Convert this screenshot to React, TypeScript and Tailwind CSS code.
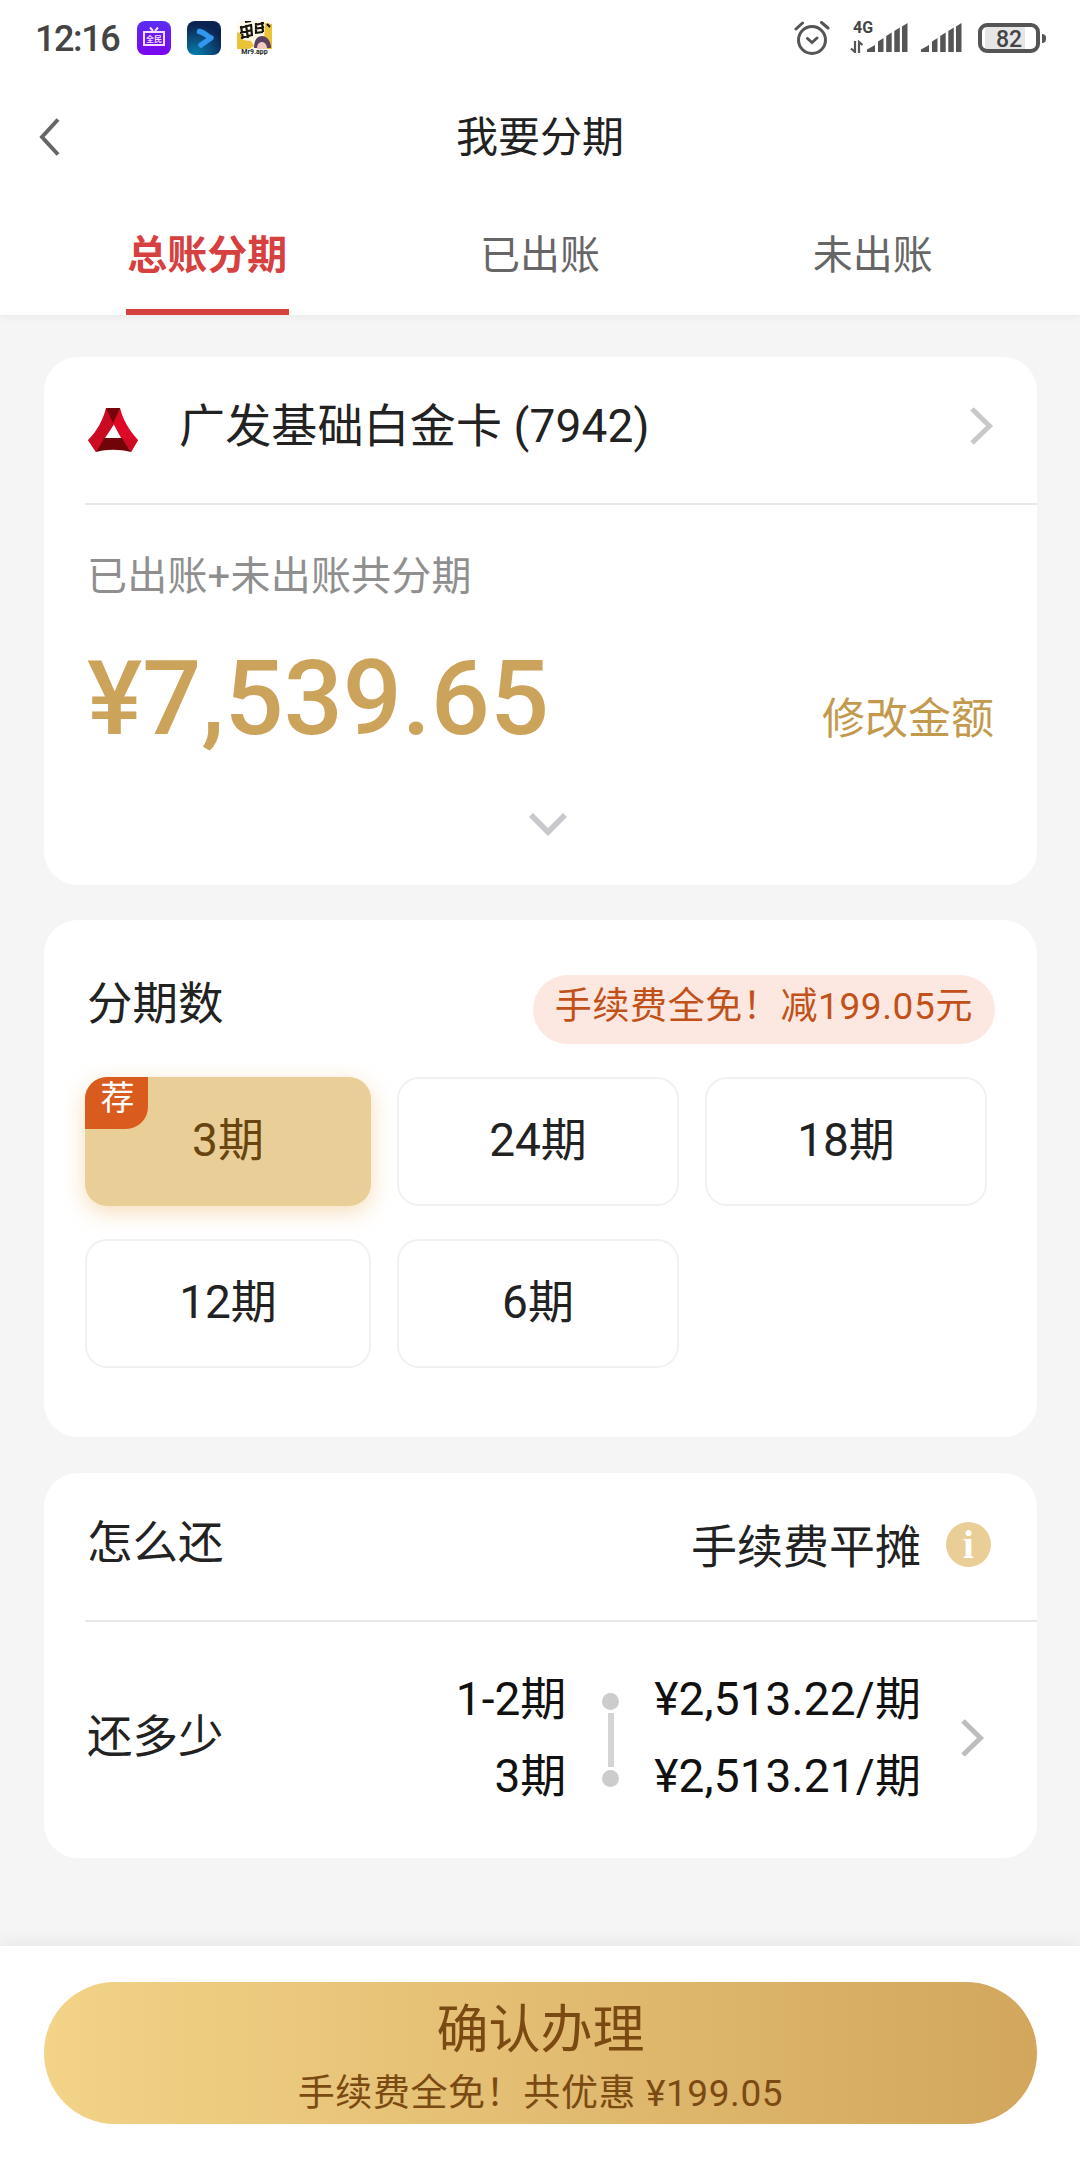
import { useState } from "react"
import clsx from "clsx"

const tabs = ["总账分期", "已出账", "未出账"]

const periods = [
  { label: "3期", recommended: true },
  { label: "24期" },
  { label: "18期" },
  { label: "12期" },
  { label: "6期" },
]

const schedule = [
  { period: "1-2期", amount: "¥2,513.22/期" },
  { period: "3期", amount: "¥2,513.21/期" },
]

function Signal() {
  return (
    <svg width="41" height="30" viewBox="0 0 41 30" fill="#555">
      <path d="M0 29v-2.500l8-4.500v7zM11 29V18.500l5.500-3.500v14zM19.200 29V13l5.500-3.500V29zM27.300 29V8l5.500-3.500V29zM35 29V3.500L40.500 0v29z" />
    </svg>
  )
}

function ChevronRight({ className }: { className?: string }) {
  return (
    <svg className={className} width="24" height="38" viewBox="0 0 24 38" fill="none" stroke="currentColor" strokeWidth="5">
      <path d="M2 2l17.500 17L2 36" />
    </svg>
  )
}

function StatusBar() {
  return (
    <div className="flex h-[76px] items-center pl-[35px] pr-[34px] text-[#444]">
      <span className="w-[102px] pt-0.5 text-[36px] leading-[76px] font-medium tracking-[-1.4px]">12:16</span>

      {/* App notifications */}
      <svg className="mr-4" width="34" height="34" viewBox="0 0 34 34">
        <defs>
          <linearGradient id="tv" x1="0" y1="0" x2="0" y2="1">
            <stop offset="0" stopColor="#5b2ef2" />
            <stop offset="1" stopColor="#7a05f0" />
          </linearGradient>
        </defs>
        <rect width="34" height="34" rx="8" fill="url(#tv)" />
        <path d="M7 11h20v13H7zM13 6.500l3 3.500M21 6.500L18 10" fill="none" stroke="#f3dcff" strokeWidth="2" />
        <text x="17" y="20.800" textAnchor="middle" fontSize="8" fontWeight="700" fill="#f3dcff">全民</text>
      </svg>
      <svg className="mr-4" width="34" height="34" viewBox="0 0 34 34">
        <defs>
          <radialGradient id="play" cx="0.25" cy="1" r="0.9">
            <stop offset="0" stopColor="#087fae" />
            <stop offset="1" stopColor="#0b2350" />
          </radialGradient>
        </defs>
        <rect width="34" height="34" rx="8" fill="url(#play)" />
        <path d="M12.500 10.500c4 .500 7 4 11.500 6.500-4 2.500-7 5-10 7" fill="none" stroke="#3196ee" strokeWidth="5.500" strokeLinecap="round" strokeLinejoin="round" />
      </svg>
      <svg width="35" height="34" viewBox="0 0 35 34">
        <rect width="35" height="28" rx="5" fill="#fffbe8" />
        <path d="M0 11l4 2 2 6 8 1 3 5-5 3H0zM28 2l7 1v25h-5l-3-9z" fill="#eac436" />
        <path d="M17 27c0-8 3-12 8-12s9 5 9 12z" fill="#5b4262" />
        <path d="M20 28c0-5 2-7 5-7s5 3 5 7z" fill="#f3c9bd" />
        <path d="M3 7l11-3M3 12l12-3M4 17l11-3M4 5l2 13M9 4l2 13M14 3l1 12M18 4l9-2M18 8l9-2M18 12l8-1M19 2v11M25 1l1 10M30 3l3 3M8 1l6-1" fill="none" stroke="#171512" strokeWidth="2.200" />
        <text x="17.500" y="33" textAnchor="middle" fontSize="7" fontWeight="700" fill="#222">Mr9.app</text>
      </svg>

      {/* System indicators */}
      <svg className="ml-auto" width="36" height="36" viewBox="0 0 36 36" fill="none" stroke="#555" strokeWidth="3" strokeLinecap="round">
        <circle cx="18" cy="20" r="13.500" />
        <path d="M13.500 18.500l4.500 4 5-4.500M2 9l6.500-6M34 8l-6.500-5.500" />
      </svg>
      <div className="relative ml-[18px] flex h-9 w-[60px] items-end justify-end pb-[3px]">
        <span className="absolute left-[5px] top-0 text-[16px] leading-none font-bold">4G</span>
        <svg className="absolute bottom-[3px] left-0.5" width="13" height="13" viewBox="0 0 13 13" fill="none" stroke="#555" strokeWidth="2.200">
          <path d="M5 1v11L1 8.500M9 13V2l3.500 3" />
        </svg>
        <Signal />
      </div>
      <div className="ml-[13px] flex h-9 items-end pb-[3px]">
        <Signal />
      </div>
      <div className="ml-4 flex h-[30px] w-[62px] items-center justify-center rounded-[9px] border-4 border-[#555] bg-[linear-gradient(90deg,#fff_3px,#e6e6e6_3px,#e6e6e6_43px,#fff_43px)]">
        <span className="pt-0.5 text-[23px] leading-none font-medium">82</span>
      </div>
      <div className="ml-[2px] h-[9px] w-1 rounded-r-sm bg-[#555]" />
    </div>
  )
}

function BankLogo() {
  return (
    <svg width="50" height="44" viewBox="0 0 50 44">
      <path d="M18 0h14c3 12 9 22 18 32L43 44 33 30 25 15z" fill="#dd0927" />
      <path d="M32 0c-5 15-10 28-24 44L0 32C9 23 15 12 18 0z" fill="#c90a20" />
      <path d="M18 0h14l-7 15z" fill="#76050b" />
      <path d="M25 18l8 12H17z" fill="#fff" />
      <path d="M16 30h18l9 14c-12-3-24-3-35 0z" fill="#710408" />
      <path d="M0 32l16-2-8 14zM50 32l-16-2 9 14z" fill="#cd0b22" />
    </svg>
  )
}

export default function App() {
  const [activeTab, setActiveTab] = useState(0)
  const [selected, setSelected] = useState(0)

  return (
    <div className="flex h-[2160px] w-[1080px] flex-col overflow-hidden bg-[#f5f5f5] font-[Roboto,'Noto_Sans_CJK_SC',sans-serif] text-[#222]">
      <header className="relative h-[315px] bg-white shadow-[0_2px_8px_rgba(0,0,0,0.05)]">
        <StatusBar />
        <div className="grid h-[124px] grid-cols-[120px_1fr_120px] items-center">
          <button aria-label="返回" className="pb-[3px] pl-[39px]">
            <svg width="22" height="38" viewBox="0 0 22 38" fill="none" stroke="#666" strokeWidth="4">
              <path d="M19 1.500L3 19l16 17.500" />
            </svg>
          </button>
          <h1 className="text-center text-[42px] leading-[124px]">我要分期</h1>
        </div>
        <nav className="grid h-[115px] grid-cols-3 px-[41px]">
          {tabs.map((tab, i) => (
            <button
              key={tab}
              onClick={() => setActiveTab(i)}
              className={clsx(
                "justify-self-center border-b-[6px] px-[1.5px] pt-[3px] text-[40px] leading-[106px]",
                i === activeTab ? "border-[#d6403e] font-bold text-[#d6403e]" : "border-transparent text-[#666]",
              )}
            >
              {tab}
            </button>
          ))}
        </nav>
      </header>

      <main className="flex flex-1 flex-col px-[44px] pt-[42px]">
        {/* Card and amount */}
        <section className="h-[528px] w-[993px] rounded-[34px] bg-white pl-[41px]">
          <div className="flex h-[148px] items-center border-b-2 border-[#e8e8e8] pr-[43px] pl-[3px]">
            <BankLogo />
            <span className="ml-[41px] flex-1 pb-[9px] text-[46px] leading-[60px] tracking-[0.15px]">广发基础白金卡 (7942)</span>
            <ChevronRight className="mb-[9px] text-[#c8c8c8]" />
          </div>
          <p className="pt-[42px] pl-0.5 text-[40px] leading-[60px] tracking-[0.2px] text-[#8f8f8f]">已出账+未出账共分期</p>
          <div className="flex h-[150px] items-baseline justify-between pt-0.5 pr-[43px] pl-0.5">
            <span className="text-[104px] leading-[180px] font-medium text-[#cca35b]">¥7,539.65</span>
            <button className="text-[43px] text-[#c39a4d]">修改金额</button>
          </div>
          <svg className="ml-[444px] mt-[56px]" width="38" height="24" viewBox="0 0 38 24" fill="none" stroke="#c8c8cc" strokeWidth="5.500">
            <path d="M2 2l17 17L36 2" />
          </svg>
        </section>

        {/* Number of instalments */}
        <section className="mt-[35px] h-[517px] w-[993px] rounded-[34px] bg-white pl-[41px]">
          <div className="flex items-start justify-between pt-[55px] pr-[42px] pl-0.5">
            <h2 className="text-[45.500px] leading-[60px]">分期数</h2>
            <span className="h-[69px] rounded-full bg-[#fce8e0] px-[22px] text-[37px] leading-[64px] tracking-[0.6px] text-[#c25119]">
              手续费全免！减199.05元
            </span>
          </div>
          <div className="mt-[33px] grid grid-cols-[286px_282px_282px] gap-x-[26px] gap-y-[33px]">
            {periods.map((p, i) => (
              <button
                key={p.label}
                onClick={() => setSelected(i)}
                className={clsx(
                  "relative h-[129px] rounded-[22px] pb-[3px] text-[46px] leading-none",
                  i === selected
                    ? "bg-[#e9cf97] text-[#684411] shadow-[0_6px_22px_rgba(233,176,90,0.42)]"
                    : "border-[2.500px] border-[#f1f1f1]",
                )}
              >
                {p.label}
                {p.recommended && (
                  <span className="absolute top-0 left-0 h-[52px] w-[63px] rounded-tl-[22px] rounded-br-[22px] bg-[#d95b1e] pl-0.5 text-[34px] leading-[42px] text-white">
                    荐
                  </span>
                )}
              </button>
            ))}
          </div>
        </section>

        {/* Repayment */}
        <section className="mt-[36px] h-[385px] w-[993px] rounded-[34px] bg-white pl-[41px]">
          <div className="flex h-[149px] items-center border-b-2 border-[#e8e8e8] pr-[46px] pl-0.5 text-[45.500px] leading-[60px]">
            <h2 className="flex-1 pb-1.5">怎么还</h2>
            <span className="mr-[25px] text-[46px]">手续费平摊</span>
            <span className="mb-1 flex h-[45px] w-[45px] items-center justify-center rounded-full bg-[#e9cf97] font-['Liberation_Serif',serif] text-[39px] leading-none font-bold text-white">
              i
            </span>
          </div>
          <div className="flex h-[231px] items-center pr-[52px] pl-0.5 text-[46px] leading-[77px]">
            <h2 className="flex-1 text-[45.500px]">还多少</h2>
            <div className="text-right text-[#111]">
              {schedule.map((s) => (
                <p key={s.period}>{s.period}</p>
              ))}
            </div>
            <div className="mr-[35px] ml-9 mt-1 flex flex-col items-center gap-[3px]">
              <div className="h-[17px] w-[17px] rounded-full bg-[#ccc]" />
              <div className="h-[54px] w-[6px] bg-[#d4d4d4]" />
              <div className="h-[17px] w-[17px] rounded-full bg-[#ccc]" />
            </div>
            <div className="tracking-[0.12px] text-[#111]">
              {schedule.map((s) => (
                <p key={s.period}>{s.amount}</p>
              ))}
            </div>
            <ChevronRight className="ml-10 text-[#bdbdbd]" />
          </div>
        </section>
      </main>

      <footer className="h-[214px] bg-white px-[44px] pt-[36px] shadow-[0_-4px_16px_rgba(0,0,0,0.06)]">
        <button className="flex h-[142px] w-[993px] flex-col items-center rounded-full bg-linear-to-r from-[#f2d387] to-[#d2a65d] pt-[17px] text-[#7a4a12]">
          <span className="text-[52px] leading-[64px]">确认办理</span>
          <span className="text-[37px] leading-[62px] tracking-[0.6px]">手续费全免！共优惠 ¥199.05</span>
        </button>
      </footer>
    </div>
  )
}
